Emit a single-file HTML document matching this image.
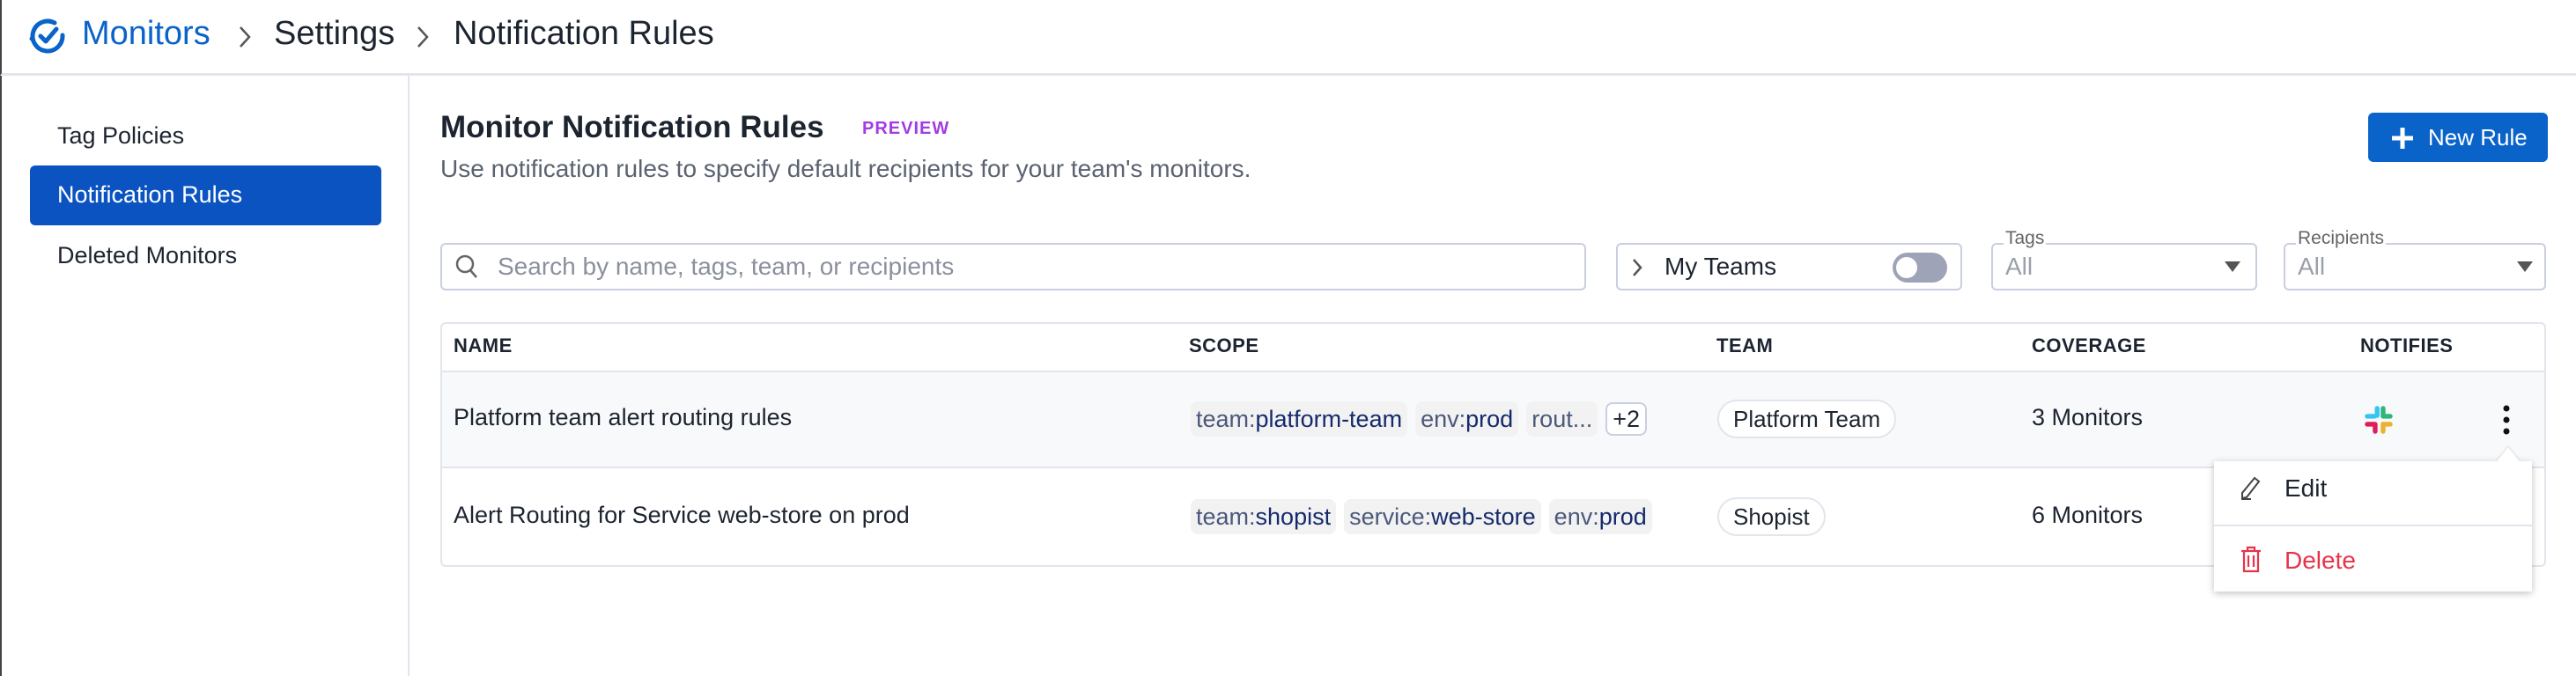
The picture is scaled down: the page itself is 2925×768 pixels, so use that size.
<!DOCTYPE html>
<html><head><meta charset="utf-8"><style>
*{box-sizing:border-box;margin:0;padding:0}
body{width:2925px;height:768px;overflow:hidden;background:#fff;font-family:"Liberation Sans",sans-serif;color:#1c2430;position:relative}
.a{position:absolute;white-space:nowrap}
.hdr{left:0;top:0;width:2925px;height:86px;border-bottom:3px solid #e2e5ec;border-left:2px solid #444}
.side{left:0;top:86px;width:465px;height:682px;border-right:2px solid #e2e5ec;border-left:2px solid #444}
.si{font-size:27px;left:65px}
.tag{display:inline-block;background:#f2f2f3;border-radius:8px;padding:0 6px;height:40px;line-height:40px;margin-right:9px;color:#4b587a;font-size:27px;vertical-align:middle}
.tag b{font-weight:normal;color:#142a6b}
.th{font-size:22px;font-weight:bold;color:#1c2430;top:380px;letter-spacing:.5px}
.pill{border:2px solid #e2e5ec;border-radius:22px;height:44px;line-height:40px;padding:0 16px;font-size:26px;background:#fff}
.box{border:2px solid #c9cfe0;border-radius:6px;height:54px}
.chev{fill:none;stroke:#555;stroke-width:2.5}
</style></head><body>
<div class="a hdr"></div>
<svg class="a" style="left:32px;top:20px" width="44" height="44" viewBox="0 0 44 44"><path d="M30 6 A17 17 0 1 0 39 20" fill="none" stroke="#0a63c9" stroke-width="5" stroke-linecap="round"/><path d="M14 21 l6 6 l12 -14" fill="none" stroke="#0a63c9" stroke-width="5" stroke-linecap="round" stroke-linejoin="round"/><circle cx="4" cy="24" r="2.5" fill="#0a63c9"/></svg>
<div class="a" style="left:93px;top:17px;font-size:38px;color:#0a63c9">Monitors</div>
<svg class="a" style="left:270px;top:28px" width="16" height="28"><path class="chev" d="M3 3 L13 14 L3 25"/></svg>
<div class="a" style="left:311px;top:17px;font-size:38px">Settings</div>
<svg class="a" style="left:472px;top:28px" width="16" height="28"><path class="chev" d="M3 3 L13 14 L3 25"/></svg>
<div class="a" style="left:515px;top:17px;font-size:38px">Notification Rules</div>

<div class="a side"></div>
<div class="a si" style="top:139px">Tag Policies</div>
<div class="a" style="left:34px;top:188px;width:399px;height:68px;background:#0a53c0;border-radius:6px"></div>
<div class="a si" style="top:206px;color:#fff">Notification Rules</div>
<div class="a si" style="top:275px">Deleted Monitors</div>

<div class="a" style="left:500px;top:125px;font-size:35px;font-weight:bold">Monitor Notification Rules</div>
<div class="a" style="left:979px;top:135px;font-size:20px;font-weight:bold;color:#a23be6;letter-spacing:1px">PREVIEW</div>
<div class="a" style="left:500px;top:176px;font-size:28px;color:#5a6270">Use notification rules to specify default recipients for your team's monitors.</div>
<div class="a" style="left:2689px;top:128px;width:204px;height:56px;background:#0a63c9;border-radius:6px;color:#fff;font-size:26px;line-height:56px;padding-left:68px">New Rule</div>
<svg class="a" style="left:2714px;top:143px" width="28" height="28"><path d="M14 2v24M2 14h24" stroke="#fff" stroke-width="5"/></svg>

<div class="a box" style="left:500px;top:276px;width:1301px"></div>
<svg class="a" style="left:516px;top:288px" width="28" height="30"><circle cx="12" cy="12" r="9" fill="none" stroke="#666" stroke-width="2.5"/><path d="M18 19l7 8" stroke="#666" stroke-width="2.5"/></svg>
<div class="a" style="left:565px;top:287px;font-size:28px;color:#8a909c">Search by name, tags, team, or recipients</div>
<div class="a box" style="left:1835px;top:276px;width:393px"></div>
<svg class="a" style="left:1852px;top:292px" width="14" height="24"><path class="chev" d="M3 3 L11 12 L3 21"/></svg>
<div class="a" style="left:1890px;top:287px;font-size:28px">My Teams</div>
<div class="a" style="left:2149px;top:287px;width:62px;height:34px;border-radius:17px;background:#9ea3b8"></div>
<div class="a" style="left:2153px;top:292px;width:24px;height:24px;border-radius:12px;background:#fff"></div>
<div class="a box" style="left:2261px;top:276px;width:302px"></div>
<div class="a" style="left:2275px;top:259px;font-size:21px;color:#666;background:#fff;padding:0 2px">Tags</div>
<div class="a" style="left:2277px;top:287px;font-size:28px;color:#9aa0aa">All</div>
<div class="a" style="left:2526px;top:297px;width:0;height:0;border-left:9px solid transparent;border-right:9px solid transparent;border-top:12px solid #555"></div>
<div class="a box" style="left:2593px;top:276px;width:298px"></div>
<div class="a" style="left:2607px;top:259px;font-size:21px;color:#666;background:#fff;padding:0 2px">Recipients</div>
<div class="a" style="left:2609px;top:287px;font-size:28px;color:#9aa0aa">All</div>
<div class="a" style="left:2858px;top:297px;width:0;height:0;border-left:9px solid transparent;border-right:9px solid transparent;border-top:12px solid #555"></div>

<div class="a" style="left:500px;top:366px;width:2391px;height:278px;border:2px solid #e2e5ec;border-radius:6px"></div>
<div class="a" style="left:502px;top:421px;width:2387px;height:111px;background:#f8f9fb;border-top:2px solid #e2e5ec;border-bottom:2px solid #e2e5ec"></div>
<div class="a th" style="left:515px">NAME</div>
<div class="a th" style="left:1350px">SCOPE</div>
<div class="a th" style="left:1949px">TEAM</div>
<div class="a th" style="left:2307px">COVERAGE</div>
<div class="a th" style="left:2680px">NOTIFIES</div>

<div class="a" style="left:515px;top:459px;font-size:27px">Platform team alert routing rules</div>
<div class="a" style="left:1352px;top:456px"><span class="tag">team:<b>platform-team</b></span><span class="tag">env:<b>prod</b></span><span class="tag">rout...</span><span class="tag" style="background:#fff;border:2px solid #c9cfe0;color:#1c2430;height:38px;line-height:34px">+2</span></div>
<div class="a pill" style="left:1950px;top:454px">Platform Team</div>
<div class="a" style="left:2307px;top:459px;font-size:27px">3 Monitors</div>
<svg class="a" style="left:2683px;top:458px" width="36" height="38" viewBox="0 0 16 16"><rect x="6" y="1" width="2.4" height="6" rx="1.2" fill="#36c5f0"/><rect x="1" y="5" width="6" height="2.4" rx="1.2" fill="#36c5f0"/><rect x="9" y="1" width="2.4" height="6" rx="1.2" fill="#2eb67d"/><rect x="9" y="5" width="6" height="2.4" rx="1.2" fill="#2eb67d"/><rect x="1" y="9" width="6" height="2.4" rx="1.2" fill="#e01e5a"/><rect x="5" y="9" width="2.4" height="6" rx="1.2" fill="#e01e5a"/><rect x="9" y="9" width="6" height="2.4" rx="1.2" fill="#ecb22e"/><rect x="9" y="9" width="2.4" height="6" rx="1.2" fill="#ecb22e"/></svg>
<svg class="a" style="left:2838px;top:460px" width="16" height="34"><circle cx="8" cy="4" r="3.5" fill="#111"/><circle cx="8" cy="17" r="3.5" fill="#111"/><circle cx="8" cy="30" r="3.5" fill="#111"/></svg>

<div class="a" style="left:515px;top:570px;font-size:27px">Alert Routing for Service web-store on prod</div>
<div class="a" style="left:1352px;top:567px"><span class="tag">team:<b>shopist</b></span><span class="tag">service:<b>web-store</b></span><span class="tag">env:<b>prod</b></span></div>
<div class="a pill" style="left:1950px;top:565px">Shopist</div>
<div class="a" style="left:2307px;top:570px;font-size:27px">6 Monitors</div>

<div class="a" style="left:2514px;top:524px;width:361px;height:148px;background:#fff;box-shadow:0 2px 8px rgba(0,0,0,.25)"></div>
<div class="a" style="left:2835px;top:508px;width:0;height:0;border-left:13px solid transparent;border-right:13px solid transparent;border-bottom:16px solid #fff;filter:drop-shadow(0 -1px 1px rgba(0,0,0,.15))"></div>
<div class="a" style="left:2514px;top:596px;width:361px;height:2px;background:#e2e5ec"></div>
<svg class="a" style="left:2542px;top:540px" width="28" height="30" viewBox="0 0 28 30"><path d="M4 26 L4 20 L18 3 L23 7 L9 25 Z M3 27 H14" fill="none" stroke="#444" stroke-width="2"/></svg>
<div class="a" style="left:2594px;top:539px;font-size:28px">Edit</div>
<svg class="a" style="left:2542px;top:620px" width="28" height="32" viewBox="0 0 28 32"><path d="M3 6H25M10 6V2H18V6M6 6V29H22V6M11 11V24M17 11V24" fill="none" stroke="#e8324a" stroke-width="2.2"/></svg>
<div class="a" style="left:2594px;top:621px;font-size:28px;color:#e8324a">Delete</div>
</body></html>
